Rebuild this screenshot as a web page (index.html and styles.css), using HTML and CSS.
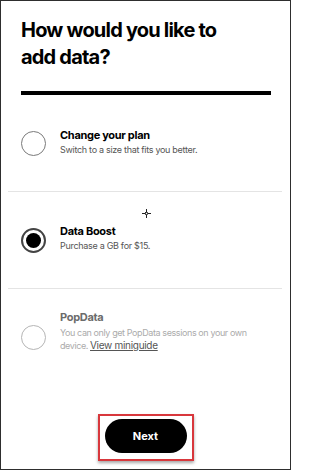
FILE: index.html
```html
<!DOCTYPE html>
<html>
<head>
<meta charset="utf-8">
<link rel="stylesheet" href="styles.css">
</head>
<body>
<div class="frame">
  <h1 class="title">How would you like to add data?</h1>
  <div class="rule"></div>
  <div class="options">
    <div class="option">
      <span class="radio"></span>
      <div class="text">
        <div class="name">Change your plan</div>
        <div class="desc">Switch to a size that fits you better.</div>
      </div>
    </div>
    <div class="option">
      <span class="radio checked"><span class="dot"></span></span>
      <div class="text">
        <div class="name">Data Boost</div>
        <div class="desc">Purchase a GB for $15.</div>
      </div>
      <svg class="cursor" width="9" height="9" viewBox="0 0 9 9"><path d="M4.5 0v3M4.5 6v3M0 4.5h3M6 4.5h3" stroke="#222" stroke-width="1"/><rect x="3.5" y="3.5" width="2" height="2" fill="none" stroke="#222" stroke-width="0.8"/></svg>
    </div>
    <div class="option disabled">
      <span class="radio"></span>
      <div class="text">
        <div class="name">PopData</div>
        <div class="desc-lines">
          <div class="desc">You can only get PopData sessions on your own</div>
          <div class="desc-row"><span class="desc">device.</span><a class="link">View miniguide</a></div>
        </div>
      </div>
    </div>
  </div>
  <div class="actions">
    <div class="highlight">
      <button class="next">Next</button>
    </div>
  </div>
</div>
</body>
</html>
```
FILE: styles.css
```css
* { box-sizing: border-box; }
html, body { margin: 0; padding: 0; background: #fff; }
body { font-family: Inter, "Liberation Sans", Arial, sans-serif; color: #000; }
.frame {
  width: 291px;
  height: 470px;
  border: 1px solid #2e2e2e;
  display: flex;
  flex-direction: column;
  overflow: hidden;
}
.title {
  margin: 0;
  padding: 16px 0 0 20px;
  font-size: 20px;
  line-height: 27px;
  font-weight: 700;
  letter-spacing: -0.8px;
  width: 245px;
}
.rule {
  margin: 20px 19px 0 20px;
  height: 4px;
  background: #000;
}
.options {
  display: flex;
  flex-direction: column;
  padding: 0 8px 0 7px;
}
.option {
  position: relative;
  height: 97px;
  display: flex;
  align-items: center;
  border-bottom: 1px solid #e4e4e4;
  padding-left: 13px;
}
.option:last-child { border-bottom: none; }
.radio {
  flex: none;
  width: 25px;
  height: 25px;
  border-radius: 50%;
  border: 1.5px solid #7a7a7a;
  display: flex;
  align-items: center;
  justify-content: center;
}
.radio.checked { border: 2px solid #444; }
.dot {
  width: 15px;
  height: 15px;
  border-radius: 50%;
  background: #000;
}
.text {
  margin-left: 14px;
  display: flex;
  flex-direction: column;
  gap: 2px;
}
.name {
  font-size: 11px;
  font-weight: 700;
  letter-spacing: -0.3px;
  line-height: 13px;
}
.desc {
  font-size: 9px;
  line-height: 12px;
  color: #555;
  letter-spacing: -0.3px;
}
.option:nth-child(1) .text { margin-top: -2px; }
.option:nth-child(2) .text { margin-top: -4px; }
.option.disabled .radio { border-color: #b5b5b5; }
.option.disabled .name { color: #6b6b6b; }
.option.disabled .desc { color: #ababab; line-height: 13px; letter-spacing: -0.4px; }
.option.disabled .text { margin-top: -12px; }
.desc-lines {
  display: flex;
  flex-direction: column;
}
.desc-row {
  display: flex;
  align-items: baseline;
  gap: 2px;
}
.link {
  color: #555;
  text-decoration: underline;
  font-size: 10px;
  line-height: 13px;
  letter-spacing: -0.3px;
}
.cursor {
  position: absolute;
  left: 134px;
  top: 17px;
}
.actions {
  flex: 1;
  display: flex;
  justify-content: center;
  align-items: flex-end;
  padding-bottom: 8px;
}
.highlight {
  border: 2px solid #d8373c;
  padding: 3px 5px 6px 5px;
  box-shadow: 0 2px 3px rgba(0,0,0,0.35);
}
.next {
  display: block;
  width: 82px;
  height: 34px;
  border: none;
  border-radius: 17px;
  background: #000;
  color: #fff;
  font-family: Inter, "Liberation Sans", Arial, sans-serif;
  font-size: 11px;
  font-weight: 700;
  padding: 0;
}
```
